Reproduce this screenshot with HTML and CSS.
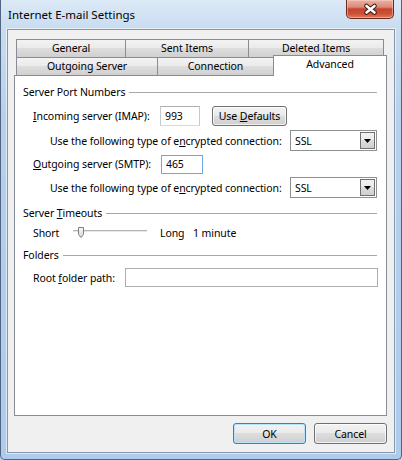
FILE: index.html
```html
<!DOCTYPE html>
<html>
<head>
<meta charset="utf-8">
<title>Internet E-mail Settings</title>
<link rel="stylesheet" href="styles.css">
</head>
<body>
<div class="window">
  <div class="titlebar">
    <span class="title">Internet E-mail Settings</span>
    <div class="close">
      <svg width="46" height="18" viewBox="0 0 46 18">
        <path d="M19.5 6 L27.5 12.5 M27.5 6 L19.5 12.5" stroke="#3a1711" stroke-width="4.6" stroke-linecap="round" fill="none"/>
        <path d="M19.5 6 L27.5 12.5 M27.5 6 L19.5 12.5" stroke="#ffffff" stroke-width="2.6" stroke-linecap="round" fill="none"/>
      </svg>
    </div>
  </div>
  <div class="client">
    <div class="tabs">
      <div class="tabrow">
        <div class="tab t-general">General</div>
        <div class="tab t-sent">Sent Items</div>
        <div class="tab t-deleted">Deleted Items</div>
      </div>
      <div class="tabrow row2">
        <div class="tab t-outgoing">Outgoing Server</div>
        <div class="tab t-connection">Connection</div>
        <div class="tab t-advanced active">Advanced</div>
      </div>
    </div>
    <div class="panel">
      <div class="group"><span>Server Port Numbers</span><div class="line"></div></div>
      <div class="row r-incoming">
        <span class="lbl-port"><u>I</u>ncoming server (IMAP):</span>
        <div class="textbox tb-993">993</div>
        <div class="btn btn-defaults"><span>Use <u>D</u>efaults</span></div>
      </div>
      <div class="row r-use r-use1">
        <span>Use the following type of e<u>n</u>crypted connection:</span>
        <div class="select">
          <span class="sel-text">SSL</span>
          <div class="sel-arrow">
            <svg width="7" height="4" viewBox="0 0 7 4"><path d="M0 0 H7 L3.5 4 Z" fill="#000"/></svg>
          </div>
        </div>
      </div>
      <div class="row r-outgoing">
        <span class="lbl-port"><u>O</u>utgoing server (SMTP):</span>
        <div class="textbox tb-465">465</div>
      </div>
      <div class="row r-use r-use2">
        <span>Use the following type of e<u>n</u>crypted connection:</span>
        <div class="select">
          <span class="sel-text">SSL</span>
          <div class="sel-arrow">
            <svg width="7" height="4" viewBox="0 0 7 4"><path d="M0 0 H7 L3.5 4 Z" fill="#000"/></svg>
          </div>
        </div>
      </div>
      <div class="group g-timeouts"><span>Server <u>T</u>imeouts</span><div class="line"></div></div>
      <div class="row r-short">
        <span class="lbl-short">Short</span>
        <svg class="slider" width="74" height="14" viewBox="0 0 74 14">
          <defs>
            <linearGradient id="thumb" x1="0" y1="0" x2="0" y2="1">
              <stop offset="0" stop-color="#f7f7f7"/>
              <stop offset="1" stop-color="#d6d6d6"/>
            </linearGradient>
          </defs>
          <rect x="0" y="4" width="74" height="1" fill="#b4b4b4"/>
          <rect x="0" y="5" width="74" height="1" fill="#e4e6e8"/>
          <path d="M5.5 1.5 H10.5 V8.5 L8 11.5 L5.5 8.5 Z" fill="url(#thumb)" stroke="#7f7f7f" stroke-width="1"/>
        </svg>
        <span class="lbl-long">Long</span>
        <span>1 minute</span>
      </div>
      <div class="group g-folders"><span>Folders</span><div class="line"></div></div>
      <div class="row r-root">
        <span class="lbl-root">Root <u>f</u>older path:</span>
        <div class="textbox tb-root"></div>
      </div>
    </div>
    <div class="buttons">
      <div class="btn btn-ok"><span>OK</span></div>
      <div class="btn btn-cancel"><span>Cancel</span></div>
    </div>
  </div>
</div>
</body>
</html>
```
FILE: styles.css
```css
html, body {
  margin: 0;
  padding: 0;
}
body {
  font-family: "Noto Sans", "Open Sans", sans-serif;
  font-size: 10.5px;
  letter-spacing: -0.08px;
  color: #000;
  background: #b9d1ec;
}
u {
  text-decoration: underline;
  text-underline-offset: 1px;
}
.window {
  width: 402px;
  height: 460px;
  box-sizing: border-box;
  border: 1px solid #4f6581;
  border-top: 0;
  border-radius: 0 0 5px 5px;
  padding: 0 6px 6px 6px;
  background: linear-gradient(180deg, #dce9f6 0px, #c9dcf0 28px, #b6d0ec 120px, #aecbeb 100%);
  display: flex;
  flex-direction: column;
}
.titlebar {
  height: 29px;
  display: flex;
  align-items: flex-start;
  flex-shrink: 0;
}
.title {
  margin-left: 1px;
  margin-top: 7px;
  font-size: 11.5px;
  letter-spacing: 0;
  line-height: 15px;
  color: #000;
}
.close {
  margin-left: auto;
  margin-right: 1px;
  width: 48px;
  height: 19px;
  box-sizing: border-box;
  border: 1px solid #6b2a20;
  border-top: 0;
  border-radius: 0 0 5px 5px;
  background: linear-gradient(180deg, #eab1a3 0px, #dc8c78 7px, #c5442d 9px, #cd5237 14px, #de7e5f 100%);
  box-shadow: inset 0 0 0 1px rgba(255, 220, 210, 0.45);
  display: flex;
  align-items: center;
  justify-content: center;
}
.close svg {
  display: block;
}
.client {
  height: 424px;
  box-sizing: border-box;
  border: 1px solid #8396ad;
  background: #f0f0f0;
  padding: 9px 7px 0 6px;
  box-shadow: 0 0 0 1px rgba(255, 255, 255, 0.6);
}
.tabs {
  height: 36px;
  padding-left: 2px;
}
.tabrow {
  display: flex;
  height: 18px;
}
.row2 {
  align-items: flex-end;
}
.tab {
  box-sizing: border-box;
  height: 18px;
  border: 1px solid #898c95;
  border-bottom: 0;
  margin-left: -1px;
  background: linear-gradient(180deg, #f3f3f3 0%, #ebebeb 45%, #dddddd 50%, #d0d0d0 100%);
  text-align: center;
  line-height: 16px;
  white-space: nowrap;
}
.tab:first-child {
  margin-left: 0;
}
.t-general { width: 110px; }
.t-sent { width: 124px; }
.t-deleted { width: 136px; }
.t-outgoing { width: 142px; }
.t-connection { width: 117px; }
.t-advanced { width: 114px; }
.tab.active {
  height: 21px;
  margin-bottom: -1px;
  background: #fff;
  position: relative;
  z-index: 1;
}
.panel {
  height: 341px;
  box-sizing: border-box;
  border: 1px solid #898c95;
  background: #fff;
  padding: 8px 9px 0 8px;
}
.group {
  display: flex;
  align-items: center;
  height: 16px;
  white-space: nowrap;
}
.group .line {
  flex: 1;
  height: 1px;
  background: #a8a8a8;
  margin-left: 4px;
}
.row {
  display: flex;
  align-items: center;
  padding-left: 10px;
  white-space: nowrap;
}
.r-incoming {
  margin-top: 5px;
  height: 22px;
}
.lbl-port {
  width: 127px;
}
.textbox {
  box-sizing: border-box;
  height: 20px;
  border: 1px solid #abadb3;
  border-left-color: #c6c8cc;
  border-right-color: #c6c8cc;
  border-bottom-color: #d6d8dc;
  background: #fff;
  padding-left: 4px;
  line-height: 18px;
}
.tb-993 {
  width: 40px;
}
.tb-465 {
  width: 42px;
  height: 19px;
  margin-left: 1px;
  border-color: #6aa8e6;
  line-height: 17px;
}
.tb-root {
  flex: 1;
  height: 19px;
  margin-right: -1px;
  border-color: #abadb3;
}
.btn {
  box-sizing: border-box;
  border: 1px solid #707070;
  border-radius: 3px;
  background: linear-gradient(180deg, #f2f2f2 0%, #ebebeb 45%, #dddddd 50%, #cfcfcf 100%);
  box-shadow: inset 0 0 0 1px rgba(255, 255, 255, 0.7);
  display: flex;
  align-items: center;
  justify-content: center;
  white-space: nowrap;
}
.btn-defaults {
  margin-left: 12px;
  width: 75px;
  height: 20px;
}
.r-use {
  padding-left: 27px;
  height: 21px;
}
.r-use1 {
  margin-top: 3px;
}
.r-use2 {
  margin-top: 2px;
}
.r-outgoing {
  margin-top: 2px;
  height: 22px;
}
.select {
  margin-left: auto;
  width: 87px;
  height: 21px;
  box-sizing: border-box;
  border: 1px solid #8f9090;
  background: #fff;
  padding: 1px;
  display: flex;
  align-items: center;
}
.sel-text {
  padding-left: 3px;
}
.sel-arrow {
  margin-left: auto;
  width: 15px;
  height: 17px;
  box-sizing: border-box;
  border: 1px solid #707070;
  background: linear-gradient(180deg, #f2f2f2 0%, #ebebeb 45%, #dddddd 50%, #cfcfcf 100%);
  display: flex;
  align-items: center;
  justify-content: center;
}
.sel-arrow svg {
  display: block;
}
.g-timeouts {
  margin-top: 7px;
}
.r-short {
  margin-top: 2px;
  height: 20px;
}
.lbl-short {
  width: 40px;
}
.slider {
  display: block;
  margin-right: 13px;
}
.lbl-long {
  width: 33px;
}
.g-folders {
  margin-top: 4px;
}
.r-root {
  margin-top: 4px;
  height: 21px;
}
.lbl-root {
  width: 92px;
}
.buttons {
  display: flex;
  justify-content: flex-end;
  gap: 8px;
  margin-top: 7px;
}
.btn-ok,
.btn-cancel {
  width: 73px;
  height: 21px;
}
.btn-ok {
  border-color: #3c7fb1;
  box-shadow: inset 0 0 0 1px #b9e3f9;
}
```
